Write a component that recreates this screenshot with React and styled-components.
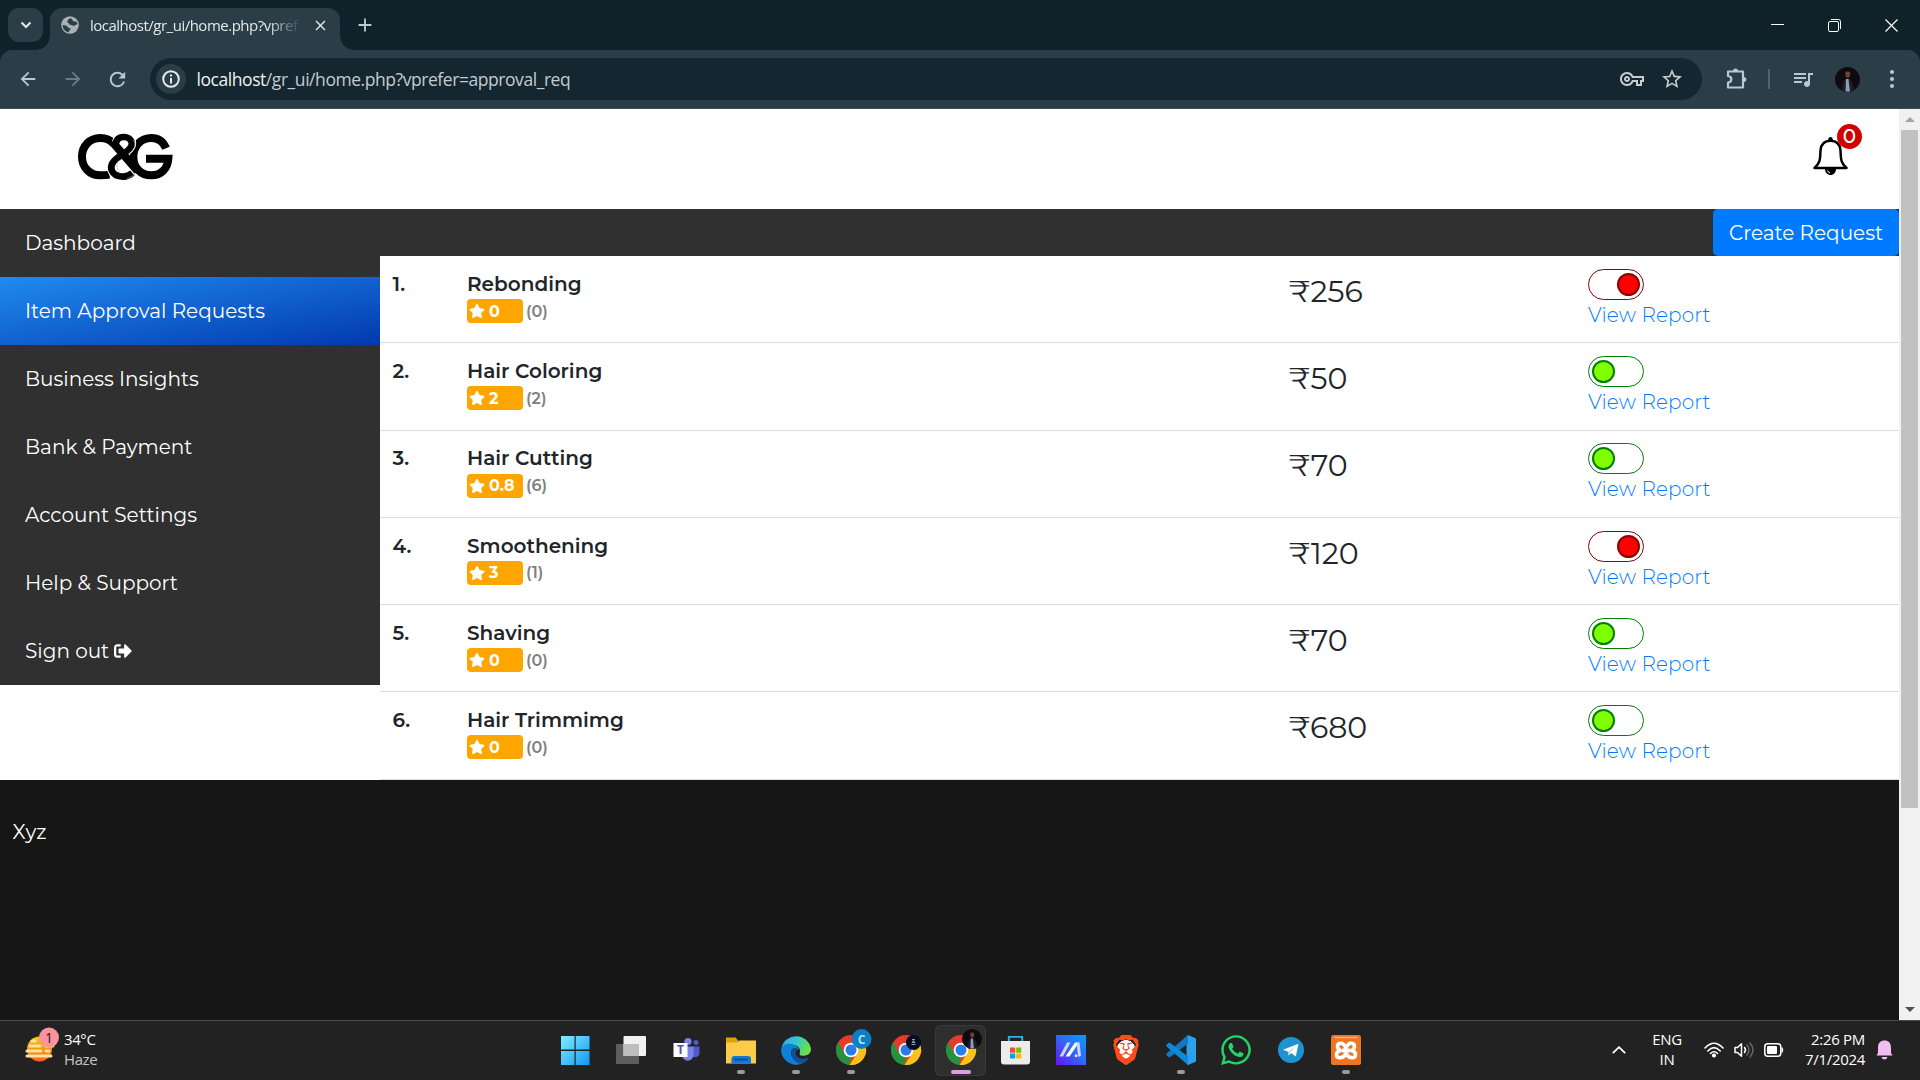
import React from "react";
import styled, { createGlobalStyle, css } from "styled-components";
import { FaStar, FaSignOutAlt, FaWhatsapp } from "react-icons/fa";
import { MdOutlineVpnKey, MdStarBorder, MdQueueMusic, MdRefresh, MdArrowBack, MdArrowForward, MdClose, MdAdd } from "react-icons/md";
import { SiBrave } from "react-icons/si";

const GlobalStyle = createGlobalStyle`
  *, *::before, *::after { box-sizing: border-box; }
  body { margin: 0; overflow: hidden; background: #fff; }
  svg { display: block; flex: none; }
`;

const uiFont = `"Segoe UI", "Open Sans", "Noto Sans", sans-serif`;
const pageFont = `Montserrat, Inter, sans-serif`;

const Screen = styled.div`
  width: 1920px;
  height: 1080px;
  display: flex;
  flex-direction: column;
  overflow: hidden;
`;

/* ---------- browser frame ---------- */
const TabStrip = styled.div`
  height: 50px;
  background: #0f222a;
  display: flex;
  align-items: flex-start;
  padding: 8px 0 0 8px;
`;
const TabSearch = styled.div`
  width: 35px;
  height: 34px;
  border-radius: 11px;
  background: #2b3d47;
  display: grid;
  place-items: center;
  margin-right: 7px;
`;
const Tab = styled.div`
  position: relative;
  width: 290px;
  height: 42px;
  border-radius: 12px 12px 0 0;
  background: #2b3d47;
  display: flex;
  align-items: center;
  padding: 0 10px 8px 11px;
  color: #e3e8ea;
  &::before, &::after {
    content: "";
    position: absolute;
    bottom: 0;
    width: 14px;
    height: 14px;
  }
  &::before { left: -14px; background: radial-gradient(circle at 0 0, transparent 13.5px, #2b3d47 14px); }
  &::after { right: -14px; background: radial-gradient(circle at 100% 0, transparent 13.5px, #2b3d47 14px); }
`;
const TabTitle = styled.div`
  width: 211px;
  margin: 0 11px 0 11px;
  white-space: nowrap;
  font: 15px/22px ${uiFont};
  letter-spacing: -0.5px;
  mask-image: linear-gradient(90deg, #000 178px, transparent 211px);
`;
const NewTab = styled.div`
  padding: 6px 0 0 14px;
  color: #b9cad3;
`;
const WindowButtons = styled.div`
  margin-left: auto;
  display: grid;
  grid-template-columns: 57px 56px 58px;
  height: 34px;
  place-items: center;
`;
const Toolbar = styled.div`
  height: 59px;
  flex: none;
  background: #0f222a;
`;
const ToolbarInner = styled.div`
  height: 59px;
  border-radius: 12px 12px 0 0;
  border-bottom: 1px solid #3c4b53;
  background: #2b3d47;
  display: flex;
  align-items: center;
  color: #b5cad6;
`;
const NavButton = styled.div`
  width: 45px;
  display: grid;
  place-items: center;
  opacity: ${(p) => (p.$off ? 0.45 : 1)};
`;
const Omnibox = styled.div`
  margin-left: 10px;
  width: 1552px;
  height: 42px;
  border-radius: 21px;
  background: #14262f;
  display: flex;
  align-items: center;
  padding: 0 18px 0 6px;
  gap: 16px;
  color: #c7cdd1;
`;
const InfoBadge = styled.div`
  width: 30px;
  height: 30px;
  border-radius: 50%;
  background: #2b3d47;
  display: grid;
  place-items: center;
  flex: none;
`;
const Url = styled.div`
  flex: 1;
  font: 17.5px/24px ${uiFont};
  letter-spacing: -0.44px;
  color: #c3cbcf;
  margin-left: -5.5px;
  b { font-weight: 400; color: #eef2f3; }
`;
const ToolIcons = styled.div`
  display: flex;
  align-items: center;
  padding-left: 24px;
`;
const Divider = styled.div`
  width: 2px;
  height: 20px;
  background: #50626d;
  margin: 0 21px 0 21px;
`;

/* ---------- page ---------- */
const Viewport = styled.div`
  flex: 1;
  display: flex;
  min-height: 0;
`;
const Page = styled.div`
  flex: 1;
  display: flex;
  flex-direction: column;
  font-family: ${pageFont};
  font-size: 20px;
  background: #fff;
`;
const Header = styled.header`
  height: 100px;
  display: flex;
  justify-content: space-between;
  align-items: flex-start;
  padding: 16px 51px 0 70px;
`;
const Bell = styled.div`
  position: relative;
  padding: 12px 0 0;
  width: 35px;
`;
const BellCount = styled.div`
  position: absolute;
  left: 24px;
  top: -1px;
  width: 25px;
  height: 25px;
  border-radius: 50%;
  background: #d00000;
  color: #fff;
  font-size: 20px;
  font-weight: 500;
  line-height: 25px;
  text-align: center;
`;
const Body = styled.div`
  height: 571px;
  display: flex;
`;
const Sidebar = styled.nav`
  width: 380px;
  height: 476px;
  background: #303030;
`;
const SideItem = styled.a`
  display: flex;
  align-items: center;
  height: 68px;
  padding: 0 25px;
  color: #fff;
  gap: 5px;
  white-space: nowrap;
  ${(p) => p.$active && css`background: linear-gradient(to bottom right, #208aef, #0239ae);`}
`;
const Main = styled.main`
  flex: 1;
  display: flex;
  flex-direction: column;
`;
const ActionBar = styled.div`
  height: 47px;
  background: #303030;
  display: flex;
  justify-content: flex-end;
`;
const CreateButton = styled.div`
  width: 186px;
  border-radius: 5px;
  background: #007bff;
  color: #fff;
  line-height: 48px;
  text-align: center;
`;
const Row = styled.div`
  height: 87.25px;
  display: grid;
  grid-template-columns: 75px 822px 299px 1fr;
  padding: 11.9px 0 0 12px;
  border-bottom: 1px solid #d9dcdf;
  color: #212529;
  &:last-child { height: 87.75px; }
`;
const Num = styled.div`
  font-weight: 600;
  line-height: 33px;
  padding-left: 0.5px;
`;
const Name = styled.div`
  height: 31px;
  font-weight: 600;
  line-height: 33px;
`;
const Rating = styled.div`
  display: flex;
  align-items: center;
  height: 24px;
  gap: 3px;
  padding-top: 0.3px;
  color: #808080;
  font-size: 16px;
  font-weight: 600;
`;
const Badge = styled.div`
  width: 56px;
  height: 24px;
  border-radius: 4px;
  background: #ffa500;
  color: #fff;
  display: flex;
  align-items: center;
  gap: 4px;
  padding-left: 2px;
  font-weight: 700;
`;
const Price = styled.div`
  font-size: 30px;
  line-height: 48px;
`;
const Toggle = styled.div`
  width: 56px;
  height: 31px;
  margin-top: 1px;
  border: 1px solid ${(p) => (p.$on ? "#008000" : "#8b0000")};
  border-radius: 16px;
  display: flex;
  align-items: center;
  justify-content: ${(p) => (p.$on ? "flex-start" : "flex-end")};
  padding: 0 3px;
  &::after {
    content: "";
    width: 23px;
    height: 23px;
    border-radius: 50%;
    border: 2px solid ${(p) => (p.$on ? "#008000" : "#8b0000")};
    background: ${(p) => (p.$on ? "#7fff00" : "#ff0000")};
  }
`;
const ReportLink = styled.a`
  display: block;
  line-height: 30px;
  color: #007bff;
  font-weight: 300;
  letter-spacing: 0.15px;
`;
const Footer = styled.footer`
  flex: 1;
  background: #161616;
  color: #fff;
  padding: 37px 12.5px;
  line-height: 30px;
`;
const Scrollbar = styled.div`
  width: 21px;
  background: #f1f1f1;
  display: flex;
  flex-direction: column;
  align-items: center;
`;
const ScrollArrow = styled.div`
  height: 21px;
  display: grid;
  place-items: center;
`;
const Thumb = styled.div`
  width: 17px;
  height: 678px;
  margin-bottom: auto;
  background: #c1c1c1;
`;

/* ---------- taskbar ---------- */
const Taskbar = styled.div`
  height: 60px;
  background: #222;
  border-top: 1px solid #494949;
  display: flex;
  color: #fff;
  font: 15px/20px ${uiFont};
`;
const Weather = styled.div`
  width: 548px;
  display: flex;
  padding: 6px 0 0 25px;
  gap: 5px;
`;
const WeatherText = styled.div`
  padding-top: 2px;
  letter-spacing: -0.4px;
  span { display: block; color: #c6c6c6; }
`;
const Apps = styled.div`
  display: grid;
  grid-template-columns: repeat(15, 55px);
`;
const AppSlot = styled.div`
  display: flex;
  flex-direction: column;
  align-items: center;
  height: 51px;
  margin-top: 4px;
  padding-top: 10px;
  ${(p) => p.$active && css`
    margin-left: 2px;
    margin-right: 2px;
    border-radius: 6px;
    background: #2e2e2e;
    box-shadow: inset 0 0 0 1px #3a3a3a;
  `}
  &::after {
    content: "";
    display: ${(p) => (p.$running ? "block" : "none")};
    width: ${(p) => (p.$active ? 20 : 8)}px;
    height: 4px;
    margin-top: 5px;
    border-radius: 2px;
    background: ${(p) => (p.$active ? "#df9fe3" : "#9a9a9a")};
  }
`;
const AppIcon = styled.div`
  width: 30px;
  height: 30px;
  display: flex;
  align-items: center;
  justify-content: center;
`;
const Tray = styled.div`
  margin-left: auto;
  padding: 0 27px 2px 0;
  display: flex;
  align-items: center;
`;
const TrayText = styled.div`
  text-align: ${(p) => p.$align};
  white-space: pre-line;
  width: ${(p) => p.$w}px;
  letter-spacing: ${(p) => p.$track}px;
  padding-bottom: 1px;
`;
const Gap = styled.div`
  width: ${(p) => p.$w}px;
`;

/* ---------- drawings ---------- */
const Logo = () => (
  <svg width="120" height="65" viewBox="0 0 360 195" fill="none" stroke="#000">
    <path strokeWidth="24" d="M288 70C280 50 266 39 244 39C212 39 190 64 190 95C190 128 212 151 244 151C274 151 293 130 295 101L228 101" />
    <path strokeWidth="24" d="M118 149C108 151 100 151 91 151C58 151 36 126 36 95C36 63 59 39 91 39C110 39 122 46 131 56" />
    <path stroke="#fff" strokeWidth="26" d="M140 58C136 46 146 36 161 36C178 36 188 48 185 60C182 72 170 80 158 88C130 104 119 122 126 138C136 158 170 160 187 144" />
    <path strokeWidth="20" d="M140 58C136 46 146 36 161 36C178 36 188 48 185 60C182 72 170 80 158 88C130 104 119 122 126 138C136 158 170 160 187 144" />
    <path strokeWidth="24" d="M126 50L203 138" />
    <path stroke="#bbb" strokeWidth="2" d="M190 44C202 62 190 78 176 86M144 112C138 124 142 136 150 140M172 160C182 158 190 152 196 145" />
  </svg>
);
const BellIcon = () => (
  <svg width="35" height="38" viewBox="0 0 35 38">
    <circle cx="17.5" cy="2.2" r="2.2" fill="#000" />
    <path d="M1.500 31C8 25 7 21 7.500 13.500C8 7 12 3.800 17.500 3.800S27 7 27.500 13.500C28 21 27 25 33.500 31Z" fill="#fff" stroke="#000" strokeWidth="2.500" strokeLinejoin="round" />
    <path d="M12 32h11c0 3.500-2.500 6-5.500 6S12 35.500 12 32z" fill="#000" />
    <path d="M14.500 33.500q.5 2 2.500 2.500" stroke="#fff" fill="none" />
  </svg>
);
const Globe = () => (
  <svg width="18" height="18" viewBox="0 0 18 18">
    <circle cx="9" cy="9" r="8.800" fill="#aab0b4" />
    <path d="M9 2.500c3 0 2 2 3.500 2.800c1.500.7 3-.5 3.800 2c.4 2-1.300 1-2.300 2c-1.500 1.500-3-.8-5-.5c-1 .2-.5-1.800-2-2C5.500 6.500 7 2.500 9 2.500zM1.700 9c2 0 4.500.7 5.200 2.300c.6 1 2.500.4 2.500 1.700c0 1.500-1.600 1.200-1.600 3.300C4 16 1.500 12.500 1.700 9z" fill="#2b3d47" />
  </svg>
);
const Puzzle = () => (
  <svg width="21" height="22" viewBox="0 0 21 22" fill="none" stroke="currentColor" strokeWidth="2.200" strokeLinejoin="round">
    <path d="M2 3.500H17V19.500H2V14.500C6.500 14 6.500 8.500 2 8Z" />
    <path d="M7 3a2.500 2.500 0 0 1 5 0zM18 9a2.500 2.500 0 0 1 0 5z" fill="currentColor" stroke="none" />
  </svg>
);
const Person = ({ size }) => (
  <svg width={size} height={size} viewBox="0 0 25 25">
    <circle cx="12.500" cy="12.500" r="12.500" fill="#0d0b10" />
    <path d="M7 25C7 16 9 12 12.500 11.500C17 12 18.500 17 19 23.500A12.500 12.500 0 0 1 7 23.800z" fill="#1b1d2b" />
    <path d="M11 12l2.500 0l1.500 12.500h-4.500z" fill="#8e9bb0" />
    <ellipse cx="12.700" cy="7" rx="2.500" ry="3.800" fill="#6d4034" />
    <path d="M9.800 6C9.500 1.500 15.500 1.500 15.500 6L14.500 4.500H11z" fill="#0b0808" />
  </svg>
);
const ChromeIcon = ({ children }) => (
  <svg width="30" height="30" viewBox="0 0 30 30" overflow="visible">
    <circle cx="15" cy="15" r="15" fill="#e33b2e" />
    <path d="M2 7.500L8.500 18.700L15 22L13.500 30A15 15 0 0 1 2 7.500z" fill="#23933f" />
    <path d="M15 8H28.300A15 15 0 0 1 13.500 30L21 18.500z" fill="#fcc21b" />
    <circle cx="15" cy="15" r="7.300" fill="#fff" />
    <circle cx="15" cy="15" r="5.500" fill="#2a7de9" />
    {children}
  </svg>
);
const Start = () => (
  <svg width="30" height="30" viewBox="0 0 30 30">
    <defs><linearGradient id="win" x1="0" y1="0" x2="1" y2="1" gradientUnits="objectBoundingBox"><stop offset="0" stopColor="#7eeffd" /><stop offset="1" stopColor="#1397f5" /></linearGradient></defs>
    <path d="M0 1H13.500V14.500H0zM14.700 1H28.500V14.500H14.700zM0 16H13.500V30H0zM14.700 16H28.500V30H14.700z" fill="url(#win)" />
  </svg>
);
const TaskView = () => (
  <svg width="30" height="30" viewBox="0 0 30 30">
    <rect x="0" y="9" width="23" height="20" rx="1" fill="#5e5e5e" />
    <rect x="7.500" y="1" width="22.500" height="20" rx="1" fill="#f1f1f1" />
    <rect x="7.500" y="9" width="15.500" height="12" fill="#bdbdbd" />
  </svg>
);
const Teams = () => (
  <svg width="30" height="30" viewBox="0 0 30 30">
    <circle cx="17" cy="6.500" r="3.600" fill="#7b83eb" />
    <circle cx="25" cy="7.500" r="2.500" fill="#5059c9" />
    <path d="M21 11.500H28.500V18.500a4.500 4.500 0 0 1-7 3z" fill="#5059c9" />
    <path d="M11 11.500H22.500V20a5.700 5.700 0 0 1-11.500 0z" fill="#7b83eb" />
    <rect x="2.500" y="8" width="14" height="14" fill="#fff" />
    <text x="9.500" y="19.300" textAnchor="middle" fontSize="12" fontWeight="700" fontFamily="Open Sans, sans-serif" fill="#4b53bc">T</text>
  </svg>
);
const Folder = () => (
  <svg width="30" height="30" viewBox="0 0 30 30">
    <path d="M0 2.500h9.500l3 3.500V12H0z" fill="#e3a008" />
    <path d="M0 7.500L11 7.500L13.500 5.500H30V28.500H0z" fill="#fdcb4a" />
    <path d="M5.500 28.500V24q0-3 3-3H22q3 0 3 3v4.500z" fill="#1277d4" />
    <path d="M8.500 24.500H21.500" stroke="#0a3f7d" strokeWidth="1.500" />
  </svg>
);
const Edge = () => (
  <svg width="30" height="30" viewBox="0 0 30 30">
    <defs>
      <linearGradient id="eg" x1="0" y1="0" x2="1" y2="0.400"><stop offset="0" stopColor="#2fa6e8" /><stop offset=".5" stopColor="#34c4d6" /><stop offset="1" stopColor="#6be049" /></linearGradient>
    </defs>
    <path d="M.5 13A15 15 0 0 1 30 14C30 19 25.500 21.500 20 20.500C17.500 20 19.500 18 19 15C18 9 6 7 .5 13z" fill="url(#eg)" />
    <path d="M0 15C1 9 7 7.500 12 9.500C17 11 18 14 17 15.500C13 9.500 8 16 11 21.500C13 25 19 26 24 24.500L27.500 23A15 15 0 0 1 0 15z" fill="#0f80d8" />
    <path d="M11 15C8 22 15 30 22 28.200C25 27 27 24.500 28 22.500C22 25 16 23.500 14.800 19C14.300 16.500 15 15 16 14C14 12 12 13 11 15z" fill="#104f9c" />
  </svg>
);
const Store = () => (
  <svg width="30" height="30" viewBox="0 0 30 30">
    <path d="M7.800 6V1.900H21.200V6" fill="none" stroke="#2fb4ea" strokeWidth="1.900" />
    <path d="M0 6H29V26.500q0 3-3 3H3q-3 0-3-3z" fill="#ececec" />
    <path d="M9 12.500h5.200v5.200H9z" fill="#f25022" /><path d="M15.200 12.500h5v5.200h-5z" fill="#7fba00" />
    <path d="M9 18.500h5.200v5H9z" fill="#00a4ef" /><path d="M15.200 18.500h5v5h-5z" fill="#ffb900" />
  </svg>
);
const MaxIcon = () => (
  <svg width="30" height="30" viewBox="0 0 30 30">
    <defs><linearGradient id="mx" x1="0" y1="1" x2="1" y2="0"><stop offset="0" stopColor="#6612f5" /><stop offset=".5" stopColor="#3365f6" /><stop offset="1" stopColor="#049ffb" /></linearGradient></defs>
    <path d="M0 0H30V30H0z" fill="url(#mx)" />
    <path d="M3.500 21.500L11 7.500H14.500L7 21.500z" fill="#c9d4ff" />
    <path d="M9.500 21.500L19 7.500H23L13.500 21.500z" fill="#fff" />
    <path d="M20.500 7.500H23.500L25 20.500Q24 22 22 21.500z" fill="#c9d4ff" />
    <circle cx="20" cy="20.800" r="1.300" fill="#fff" />
  </svg>
);
const Brave = styled(SiBrave)`
  color: #ff4a1c;
  background: radial-gradient(circle at 50% 48%, #fff 0 9px, transparent 9.500px);
`;
const VsCode = () => (
  <svg width="30" height="30" viewBox="0 0 30 30">
    <path d="M22 0L30 3.500V26.500L22 30L20.500 29V1z" fill="#2ba1ee" />
    <path d="M22 0V8.500L3.500 22.500L0.500 20.500V18.500z" fill="#0f79c2" />
    <path d="M22 30V21.500L3.500 7.500L.5 9.500V11.500z" fill="#0a8bd8" />
  </svg>
);
const Telegram = () => (
  <svg width="26" height="26" viewBox="0 0 26 26">
    <circle cx="13" cy="13" r="13" fill="#1f93d1" />
    <path d="M5 12.700L20.500 6.800L17.800 19.500L13 16L10.800 18.500L10.300 14.800z" fill="#fff" />
    <path d="M10.300 14.800L17.500 9.300L12 15.500L10.800 18.500z" fill="#b9d8ec" />
  </svg>
);
const Xampp = () => (
  <svg width="30" height="30" viewBox="0 0 30 30">
    <rect width="30" height="30" rx="2.500" fill="#ee7623" />
    <path d="M4 2.500H26" stroke="#f7b183" strokeWidth="1.500" strokeLinecap="round" />
    <path
      d="M10 8.200Q6.500 8.200 6.500 11.500Q6.500 14 9.500 15.500Q5.500 16.500 5.500 19.500Q5.500 22.800 9 22.800Q12.500 22.800 15 18.500Q17.500 22.800 21 22.800Q24.500 22.800 24.500 19.500Q24.500 16.500 20.500 15.500Q23.500 14 23.500 11.500Q23.500 8.200 20 8.200Q17 8.200 15 12.800Q13 8.200 10 8.200Z"
      fill="none" stroke="#fff" strokeWidth="3.600" strokeLinejoin="round"
    />
    <path d="M11 15.500H19" stroke="#fff" strokeWidth="4" />
  </svg>
);
const WeatherIcon = () => (
  <svg width="34" height="38" viewBox="0 0 34 38">
    <defs><linearGradient id="sun" x1="0" y1="0" x2="0" y2="1"><stop offset="0" stopColor="#f9c80e" /><stop offset="1" stopColor="#f2661a" /></linearGradient></defs>
    <circle cx="14.500" cy="22" r="12.500" fill="url(#sun)" />
    <path d="M7 14h3M5 19h10M21 19h7M2 24h14M21 24h3M2 29h24" stroke="#fbe3a0" strokeWidth="3" strokeLinecap="round" />
    <circle cx="24" cy="10.500" r="10" fill="#fb939c" />
    <text x="24" y="15.500" textAnchor="middle" fontSize="14" fontFamily="Open Sans, sans-serif" fill="#222">1</text>
  </svg>
);
const Wifi = () => (
  <svg width="20" height="16" viewBox="0 0 20 16" fill="none" stroke="#fff" strokeWidth="1.600" strokeLinecap="round">
    <path d="M1 6Q10-3.500 19 6M3.800 9Q10 2.200 16.200 9M6.500 11.500Q10 8 13.500 11.500" /><circle cx="10" cy="13.500" r="1.300" fill="#fff" />
  </svg>
);
const Speaker = () => (
  <svg width="20" height="18" viewBox="0 0 20 18" fill="none" stroke="#fff" strokeWidth="1.500" strokeLinecap="round" strokeLinejoin="round">
    <path d="M1 6.500H3.500L7.500 2.800V15.200L3.500 11.500H1zM10.500 6.500Q12.500 9 10.500 11.500" />
    <path d="M13 4Q17 9 13 14M16 2Q22 9 16 16" stroke="#666" />
  </svg>
);
const Battery = () => (
  <svg width="20" height="14" viewBox="0 0 20 14">
    <rect x=".8" y=".8" width="16" height="12.400" rx="3" fill="none" stroke="#fff" strokeWidth="1.500" />
    <rect x="3" y="3" width="10" height="8" rx="1" fill="#fff" /><path d="M17.500 4.500h1.200q1.300 2.500 0 5h-1.200z" fill="#fff" />
  </svg>
);
const NotifyBell = () => (
  <svg width="17" height="20" viewBox="0 0 17 20">
    <path d="M.5 15.500L2 13V7.500C2 3 4.500.5 8.500.5S15 3 15 7.500V13L16.500 15.500z" fill="#f2bdf3" /><path d="M5.500 17h6q-.5 2.500-3 2.500T5.500 17z" fill="#f2bdf3" />
  </svg>
);

const sideItems = [
  "Dashboard",
  "Item Approval Requests",
  "Business Insights",
  "Bank & Payment",
  "Account Settings",
  "Help & Support",
  "Sign out",
];
const items = [
  { name: "Rebonding", rating: "0", votes: 0, price: 256, on: false },
  { name: "Hair Coloring", rating: "2", votes: 2, price: 50, on: true },
  { name: "Hair Cutting", rating: "0.8", votes: 6, price: 70, on: true },
  { name: "Smoothening", rating: "3", votes: 1, price: 120, on: false },
  { name: "Shaving", rating: "0", votes: 0, price: 70, on: true },
  { name: "Hair Trimmimg", rating: "0", votes: 0, price: 680, on: true },
];
const apps = [
  { icon: <Start /> },
  { icon: <TaskView /> },
  { icon: <Teams /> },
  { icon: <Folder />, running: true },
  { icon: <Edge />, running: true },
  {
    icon: (
      <ChromeIcon>
        <circle cx="25.500" cy="4" r="10" fill="#0c7fc4" />
        <text x="25.500" y="8.500" textAnchor="middle" fontSize="12" fontWeight="700" fontFamily="Open Sans, sans-serif" fill="#b9dff2">C</text>
      </ChromeIcon>
    ),
    running: true,
  },
  {
    icon: (
      <ChromeIcon>
        <circle cx="22.500" cy="7.500" r="7.600" fill="#030d22" />
        <path d="M21 4.500h3M21 7.500l1.500-2l1.500 2zM20.500 9.500h4" stroke="#9aa3b0" fill="none" />
      </ChromeIcon>
    ),
  },
  { icon: <ChromeIcon><g transform="translate(16 -6)"><Person size={20} /></g></ChromeIcon>, running: true, active: true },
  { icon: <Store /> },
  { icon: <MaxIcon /> },
  { icon: <Brave size={30} /> },
  { icon: <VsCode />, running: true },
  { icon: <FaWhatsapp size={34} color="#25d366" /> },
  { icon: <Telegram /> },
  { icon: <Xampp />, running: true },
];

export default function App() {
  return (
    <Screen>
      <GlobalStyle />
      <TabStrip>
        <TabSearch>
          <svg width="12" height="8" viewBox="0 0 12 8" fill="none" stroke="#dfe6e9" strokeWidth="2.200"><path d="M1.500 1.500L6 6L10.500 1.500" /></svg>
        </TabSearch>
        <Tab>
          <Globe />
          <TabTitle>localhost/gr_ui/home.php?vpref</TabTitle>
          <MdClose size={17} />
        </Tab>
        <NewTab><MdAdd size={22} /></NewTab>
        <WindowButtons>
          <svg width="13" height="13"><path d="M0 5.500H13" stroke="#fff" /></svg>
          <svg width="13" height="13" viewBox="0 0 13 13" fill="none" stroke="#fff"><rect x=".5" y="2.500" width="10" height="10" rx="1.500" /><path d="M3 .5H10.500Q12.500.5 12.500 2.500V10" /></svg>
          <svg width="13" height="13" stroke="#fff" strokeWidth="1.200"><path d="M.5 .5L12.500 12.500M12.500 .5L.5 12.500" /></svg>
        </WindowButtons>
      </TabStrip>
      <Toolbar>
        <ToolbarInner>
          <Gap $w={5} />
          <NavButton><MdArrowBack size={22} /></NavButton>
          <NavButton $off><MdArrowForward size={22} /></NavButton>
          <NavButton><MdRefresh size={23} /></NavButton>
          <Omnibox>
            <InfoBadge>
              <svg width="18" height="18" viewBox="0 0 18 18"><circle cx="9" cy="9" r="7.800" fill="none" stroke="#e6eaec" strokeWidth="2" /><path d="M8 8h2v5.500H8zM8 4.500h2v2H8z" fill="#e6eaec" /></svg>
            </InfoBadge>
            <Url><b>localhost</b>/gr_ui/home.php?vprefer=approval_req</Url>
            <MdOutlineVpnKey size={24} />
            <MdStarBorder size={24} />
          </Omnibox>
          <ToolIcons>
            <Puzzle />
            <Divider />
            <MdQueueMusic size={24} />
            <Gap $w={20} />
            <Person size={25} />
            <Gap $w={30} />
            <svg width="4" height="18" viewBox="0 0 4 18" fill="currentColor"><circle cx="2" cy="2" r="2" /><circle cx="2" cy="9" r="2" /><circle cx="2" cy="16" r="2" /></svg>
          </ToolIcons>
        </ToolbarInner>
      </Toolbar>

      <Viewport>
        <Page>
          <Header>
            <Logo />
            <Bell>
              <BellIcon />
              <BellCount>0</BellCount>
            </Bell>
          </Header>
          <Body>
            <Sidebar>
              {sideItems.map((label, i) => (
                <SideItem key={label} $active={i === 1}>
                  {label}
                  {label === "Sign out" && <FaSignOutAlt size={18} />}
                </SideItem>
              ))}
            </Sidebar>
            <Main>
              <ActionBar><CreateButton>Create Request</CreateButton></ActionBar>
              {items.map((it, i) => (
                <Row key={it.name}>
                  <Num>{i + 1}.</Num>
                  <div>
                    <Name>{it.name}</Name>
                    <Rating>
                      <Badge><FaStar size={16} />{it.rating}</Badge>
                      ({it.votes})
                    </Rating>
                  </div>
                  <Price>₹{it.price}</Price>
                  <div>
                    <Toggle $on={it.on} />
                    <ReportLink>View Report</ReportLink>
                  </div>
                </Row>
              ))}
            </Main>
          </Body>
          <Footer>Xyz</Footer>
        </Page>
        <Scrollbar>
          <ScrollArrow><svg width="10" height="5"><path d="M0 5L5 0L10 5z" fill="#a3a3a3" /></svg></ScrollArrow>
          <Thumb />
          <ScrollArrow><svg width="10" height="5"><path d="M0 0L5 5L10 0z" fill="#505050" /></svg></ScrollArrow>
        </Scrollbar>
      </Viewport>

      <Taskbar>
        <Weather>
          <WeatherIcon />
          <WeatherText>34°C<span>Haze</span></WeatherText>
        </Weather>
        <Apps>
          {apps.map((a, i) => (
            <AppSlot key={i} $running={a.running} $active={a.active}>
              <AppIcon>{a.icon}</AppIcon>
            </AppSlot>
          ))}
        </Apps>
        <Tray>
          <svg width="14" height="8" viewBox="0 0 14 8" fill="none" stroke="#fff" strokeWidth="1.800"><path d="M.8 7.200L7 1.200L13.200 7.200" /></svg>
          <Gap $w={22} />
          <TrayText $align="center" $w={38} $track={-0.3}>{"ENG\nIN"}</TrayText>
          <Gap $w={18} />
          <Wifi />
          <Gap $w={10} />
          <Speaker />
          <Gap $w={10} />
          <Battery />
          <Gap $w={11} />
          <TrayText $align="right" $w={70} $track={-0.3}>{"2:26 PM\n7/1/2024"}</TrayText>
          <Gap $w={11} />
          <NotifyBell />
        </Tray>
      </Taskbar>
    </Screen>
  );
}
